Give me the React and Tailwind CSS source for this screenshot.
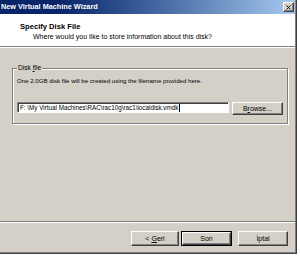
import { X } from 'lucide-react';

const raised =
  "bg-[#d4d0c8] border border-t-white border-l-white border-r-[#404040] border-b-[#404040] shadow-[inset_-1px_-1px_0_#808080]";

function Btn({ children, className = "", isDefault = false }) {
  if (isDefault) {
    return (
      <div className={`border border-black ${className}`}>
        <div className={`${raised} h-full flex items-center justify-center`}>{children}</div>
      </div>
    );
  }
  return <div className={`${raised} flex items-center justify-center ${className}`}>{children}</div>;
}

export default function App() {
  return (
    <div className="w-[300px] h-[257px] bg-white font-['Liberation_Sans',Arial,sans-serif] text-[7px] leading-[8px] text-black overflow-hidden">
      <div className="w-[297px] h-[254px] border-r border-b border-[#404040]">
        <div className="h-full flex flex-col bg-[#d4d0c8] border-r border-b border-[#808080]">
          {/* title bar */}
          <div className="h-[14px] shrink-0 flex items-center justify-between pl-px pr-[1px] bg-linear-to-r from-[#0a246a] via-[#0a246a] via-20% to-[#a6caf0]">
            <span className="text-white font-bold text-[7.3px]">New Virtual Machine Wizard</span>
            <div className={`${raised} w-[11px] h-[10px] flex items-center justify-center`}>
              <X size={7} strokeWidth={3.2} color="#000" />
            </div>
          </div>

          {/* header */}
          <div className="h-[33px] shrink-0 bg-white border-b border-[#808080] shadow-[0_1px_0_#fff] pt-[8px]">
            <div className="pl-[20px] font-bold text-[7.6px] leading-[9px]">Specify Disk File</div>
            <div className="pl-[33px] pt-[2px] leading-[8px]">Where would you like to store information about this disk?</div>
          </div>

          {/* body */}
          <div className="flex-1 flex flex-col">
            <div className="relative mt-[21px] ml-[12px] mr-[7px] h-[56px] border border-[#808080] shadow-[inset_1px_1px_0_#fff,1px_1px_0_#fff] pl-[4px] pr-[3px]">
              <span className="absolute -top-[5px] left-[4px] bg-[#d4d0c8] px-px text-[6.6px]">
                Disk <span className="underline">f</span>ile
              </span>
              <div className="pt-[8px] text-[6.1px]">One 2.0GB disk file will be created using the filename provided here.</div>
              <div className="flex items-start gap-[3px] mt-[17px]">
                <div className="w-[212px] h-[11px] bg-white border border-t-[#808080] border-l-[#808080] border-r-white border-b-white shadow-[inset_1px_1px_0_#404040] flex items-center pl-[2px] whitespace-nowrap text-[6.3px]">
                  F: \My Virtual Machines\RAC\rac10g\rac1\localdisk.vmdk
                  <span className="inline-block w-px h-[8px] bg-black ml-px"></span>
                </div>
                <Btn className="w-[51px] h-[13px]">
                  B<span className="underline">r</span>owse...
                </Btn>
              </div>
            </div>

            {/* footer */}
            <div className="mt-auto border-t border-[#808080] shadow-[inset_0_1px_0_#fff] flex justify-end pt-[9px] pb-[6px] pr-[7px]">
              <Btn className="w-[48px] h-[15px]">
                &lt; <span className="underline ml-[2px]">G</span>eri
              </Btn>
              <Btn isDefault className="w-[51px] h-[15px] ml-[2px]">Son</Btn>
              <Btn className="w-[50px] h-[15px] ml-[6px]">İptal</Btn>
            </div>
          </div>
        </div>
      </div>
    </div>
  );
}
